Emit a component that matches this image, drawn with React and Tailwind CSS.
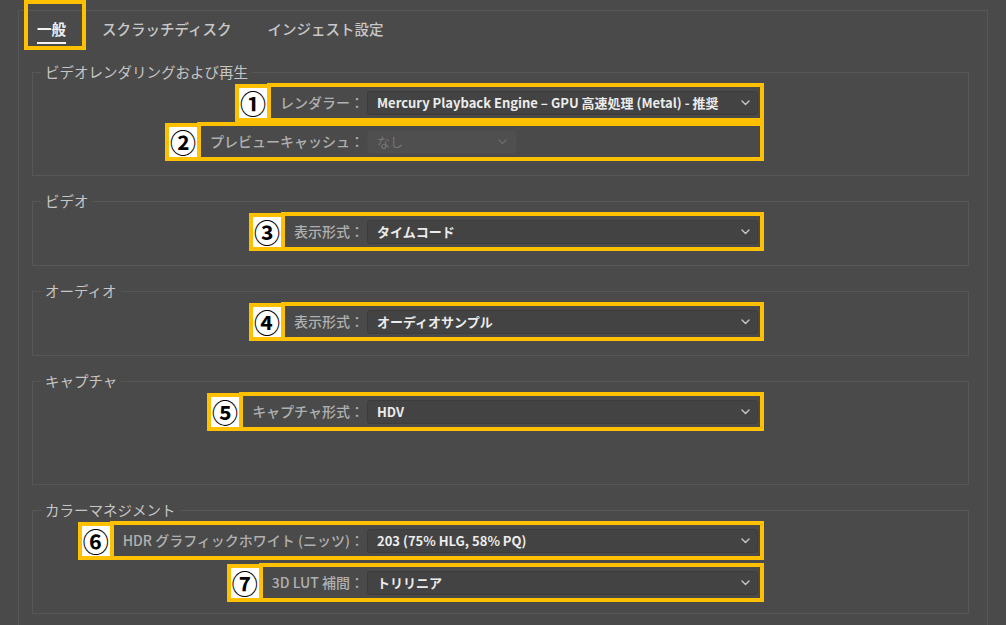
import React from "react";

const Chevron = ({ dim }) => (
  <svg width="9" height="6" viewBox="0 0 9 6" className="shrink-0">
    <path
      d="M1 1l3.5 3.5L8 1"
      fill="none"
      stroke={dim ? "#6b6b6b" : "#c9c9c9"}
      strokeWidth="1.4"
      strokeLinecap="round"
      strokeLinejoin="round"
    />
  </svg>
);

function Select({ value, disabled }) {
  if (disabled) {
    return (
      <div className="flex h-[24px] w-[150px] items-center justify-between rounded-[3px] border border-[#4c4c4c] bg-[#4f4f4f] pl-[9px] pr-[9px]">
        <span className="text-[13px] text-[#767676]">{value}</span>
        <Chevron dim />
      </div>
    );
  }
  return (
    <div className="flex h-[24px] w-full items-center justify-between rounded-[3px] border border-[#3c3c3c] bg-[#434343] pl-[9px] pr-[7px]">
      <span className="whitespace-nowrap text-[13px] font-semibold text-[#ececec]">{value}</span>
      <Chevron />
    </div>
  );
}

/* 番号バッジ + 黄色の枠 */
function Row({ n, label, value, disabled, className = "" }) {
  return (
    <div className={"flex items-center justify-end pr-[204px] " + className}>
      <div className="relative z-10 -mr-[4px] flex h-[38px] w-[36px] items-center justify-center border-4 border-[#ffc000] bg-white text-[26px] font-bold leading-none text-black">
        {n}
      </div>
      <div className="flex h-[39px] items-center border-4 border-[#ffc000] pl-[9px] pr-[2px]">
        <span className="mr-[3px] whitespace-nowrap text-[14px] font-medium text-[#b0b0b0]">{label}</span>
        <div className="w-[391px]">
          <Select value={value} disabled={disabled} />
        </div>
      </div>
    </div>
  );
}

function Group({ title, tall, children, className = "" }) {
  return (
    <fieldset
      className={
        "w-[937px] border border-[#575757] " +
        (tall ? "h-[113px] " : "h-[74px] ") +
        className
      }
    >
      <legend className="ml-[8px] px-[4px] text-[14.5px] leading-[18px] text-[#c6c6c6]">{title}</legend>
      <div className="pt-[2px]">{children}</div>
    </fieldset>
  );
}

export default function App() {
  return (
    <div className="h-[625px] w-[1006px] overflow-hidden bg-[#4a4a4a] pl-[18px] pt-[10px] font-['Noto_Sans_CJK_JP','Noto_Sans',sans-serif]">
      <div className="h-[640px] w-[970px] border border-[#575757] pl-[13px]">
        {/* TABS */}
        <div className="flex gap-[36px] pl-[5px] pt-[8px] text-[14.5px] leading-[20px]">
          <div className="relative">
            <span className="font-bold text-[#f2f2f2]">一般</span>
            <div className="mt-[3px] h-[2px] bg-[#f2f2f2]" />
            <div className="absolute -bottom-[6px] -left-[13px] -right-[20px] -top-[19px] border-4 border-[#ffc000]" />
          </div>
          <span className="font-medium text-[#c8c8c8]">スクラッチディスク</span>
          <span className="font-medium text-[#c8c8c8]">インジェスト設定</span>
        </div>

        <Group title="ビデオレンダリングおよび再生" tall className="mt-[19px]">
          <Row n="①" label="レンダラー：" value="Mercury Playback Engine – GPU 高速処理 (Metal) - 推奨" />
          <Row n="②" label="プレビューキャッシュ：" value="なし" disabled />
        </Group>

        <Group title="ビデオ" className="mt-[16px]">
          <Row n="③" label="表示形式：" value="タイムコード" />
        </Group>

        <Group title="オーディオ" className="mt-[16px]">
          <Row n="④" label="表示形式：" value="オーディオサンプル" />
        </Group>

        <Group title="キャプチャ" tall className="mt-[16px]">
          <Row n="⑤" label="キャプチャ形式：" value="HDV" />
        </Group>

        <Group title="カラーマネジメント" tall className="mt-[16px]">
          <Row n="⑥" label="HDR グラフィックホワイト (ニッツ)：" value="203 (75% HLG, 58% PQ)" />
          <Row n="⑦" label="3D LUT 補間：" value="トリリニア" className="mt-[3px]" />
        </Group>
      </div>
    </div>
  );
}
